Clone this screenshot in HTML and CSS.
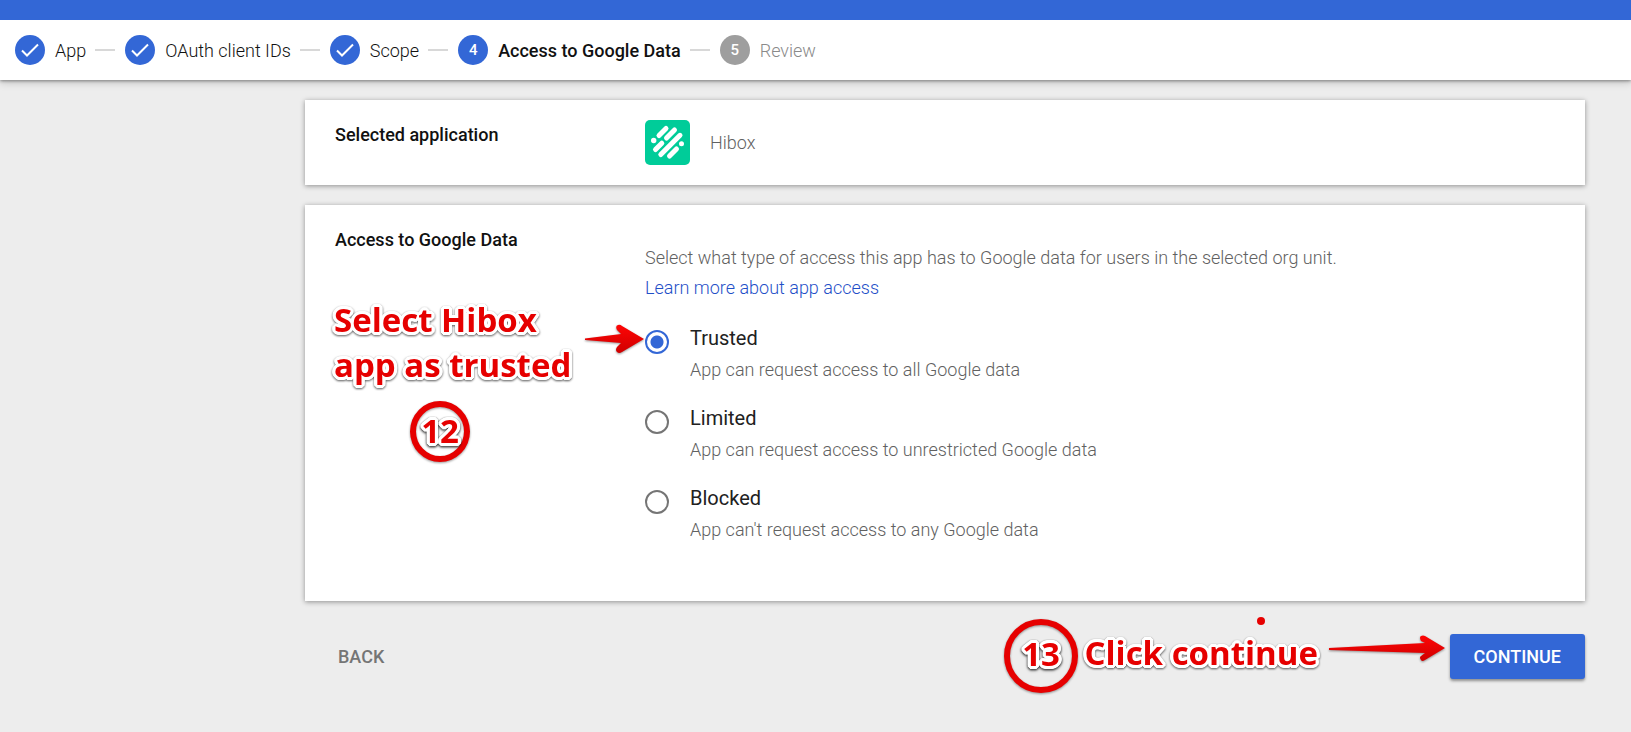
FILE: index.html
```html
<!DOCTYPE html>
<html lang="en">
<head>
<meta charset="utf-8">
<title>Access to Google Data</title>
<link rel="stylesheet" href="styles.css">
</head>
<body>
<header class="header">
  <div class="topbar"></div>
  <ol class="stepper">
    <li class="step"><span class="badge"><svg class="check" viewBox="0 0 18 14" aria-hidden="true"><path d="M1 7.5 6 12.5 17 1.5"/></svg></span><span class="step-name">App</span></li>
    <li class="step"><span class="badge"><svg class="check" viewBox="0 0 18 14" aria-hidden="true"><path d="M1 7.5 6 12.5 17 1.5"/></svg></span><span class="step-name">OAuth client IDs</span></li>
    <li class="step"><span class="badge"><svg class="check" viewBox="0 0 18 14" aria-hidden="true"><path d="M1 7.5 6 12.5 17 1.5"/></svg></span><span class="step-name">Scope</span></li>
    <li class="step step-current" aria-current="step"><span class="badge">4</span><span class="step-name">Access to Google Data</span></li>
    <li class="step step-pending"><span class="badge">5</span><span class="step-name">Review</span></li>
  </ol>
</header>
<main class="main">
  <section class="card">
    <h2 class="card-title">Selected application</h2>
    <div class="app">
      <svg class="app-icon" viewBox="0 0 45 45" aria-hidden="true">
        <rect width="45" height="45" rx="5" fill="#00cc99"/>
        <g stroke="#fff" stroke-width="5" stroke-linecap="round" fill="none">
          <path d="M14 15.500 21 8.500M21.500 18 29.500 10M10.500 29.500 16.800 23.200M15.800 34.500 35 15.300M24.500 36 31.500 29"/>
        </g>
        <circle cx="8.700" cy="20.500" r="2.700" fill="#fff"/><circle cx="36.500" cy="23.800" r="2.500" fill="#fff"/>
      </svg>
      <span>Hibox</span>
    </div>
  </section>
  <section class="card card-access">
    <h2 class="card-title">Access to Google Data</h2>
    <div class="access">
      <p class="intro">Select what type of access this app has to Google data for users in the selected org unit.<br><a class="link" href="#">Learn more about app access</a></p>
      <div class="options" role="radiogroup" aria-label="Access to Google Data">
        <label class="option"><input class="radio" type="radio" name="access" checked><span class="option-text"><span class="option-name">Trusted</span><span>App can request access to all Google data</span></span></label>
        <label class="option"><input class="radio" type="radio" name="access"><span class="option-text"><span class="option-name">Limited</span><span>App can request access to unrestricted Google data</span></span></label>
        <label class="option"><input class="radio" type="radio" name="access"><span class="option-text"><span class="option-name">Blocked</span><span>App can't request access to any Google data</span></span></label>
      </div>
    </div>
    <div class="note note-select">Select Hibox<br>app as trusted</div>
    <div class="ring ring-small"><span class="note">12</span></div>
    <svg class="arrow arrow-trusted" viewBox="0 0 60 32" aria-hidden="true">
      <defs><linearGradient id="red" x1="0" y1="0" x2="0" y2="1"><stop offset="0" stop-color="#ff0505"/><stop offset="1" stop-color="#cf0000"/></linearGradient></defs>
      <path fill="url(#red)" d="M0 15.500 36 11 32 7Q30 3 33 2Q35 1 37 3L59 16 37 29Q34 31 32 29Q30 27 32 24L36 20 0 17Z"/>
    </svg>
  </section>
  <div class="actions">
    <button class="btn btn-back" type="button">BACK</button>
    <button class="btn btn-continue" type="button">CONTINUE</button>
    <div class="ring ring-large"><span class="note">13</span></div>
    <div class="note note-continue">Click continue</div>
    <span class="dot"></span>
    <svg class="arrow arrow-continue" viewBox="0 0 118 28" aria-hidden="true">
      <path fill="url(#red)" d="M0 13 96 8 92 6Q90 2 92 1Q94 0 96 1L116 13 96 25Q93 27 92 25Q90 22 92 21L96 18 0 15Z"/>
    </svg>
  </div>
</main>
</body>
</html>
```

FILE: styles.css
```css
* { box-sizing: border-box; }

body {
  margin: 0;
  background: #ededed;
  color: #111;
  font: 300 18px/30px Roboto, "Open Sans", sans-serif;
}

.header {
  position: relative;
  background: #fff;
  box-shadow: 0 1px 3px rgba(0, 0, 0, .4), 0 3px 8px rgba(0, 0, 0, .16);
}

.topbar { height: 20px; background: #3367d6; }

.stepper {
  display: flex;
  align-items: center;
  height: 60px;
  margin: 0;
  padding: 0 15px;
  list-style: none;
}

.step { display: flex; align-items: center; gap: 10px; white-space: nowrap; }
.step + .step::before {
  content: "";
  width: 20px;
  height: 2px;
  margin-left: 9px;
  background: #d8d8d8;
}
.step-name { padding-top: 2px; }
.step-current { font-weight: 500; }
.step-pending { color: #8a8a8a; }

.badge {
  display: flex;
  align-items: center;
  justify-content: center;
  width: 30px;
  height: 30px;
  border-radius: 50%;
  background: #3367d6;
  color: #fff;
  font-size: 15px;
  font-weight: 500;
}
.step-pending .badge { background: #9e9e9e; }
.check { width: 18px; height: 14px; fill: none; stroke: #fff; stroke-width: 2; }

.main { padding: 20px 46px 53px 305px; }

.card {
  position: relative;
  display: grid;
  grid-template-columns: 310px 1fr;
  padding: 20px 30px;
  background: #fff;
  box-shadow: 0 1px 5px rgba(0, 0, 0, .4);
}
.card + .card { margin-top: 20px; }
.card-access { padding-bottom: 56px; }
.card-title { margin: 0; font-size: 18px; font-weight: 500; line-height: 30px; }

.app { display: flex; align-items: center; gap: 20px; color: #616161; }
.app-icon { width: 45px; height: 45px; }

.access { padding-top: 18px; color: #616161; }
.intro { margin: 0; }
.link { color: #1f50c8; text-decoration: none; }

.options { display: grid; gap: 18px; margin-top: 20px; }
.option { display: flex; align-items: flex-start; gap: 21px; }
.option-text { display: grid; line-height: 31px; }
.option-name { color: #212121; font-size: 20px; font-weight: 400; }

.radio {
  appearance: none;
  width: 24px;
  height: 24px;
  margin: 7px 0 0;
  border: 2px solid #757575;
  border-radius: 50%;
}
.radio:checked {
  border-color: #3367d6;
  background: radial-gradient(circle, #3367d6 6px, transparent 7px);
}

.actions {
  position: relative;
  display: flex;
  justify-content: space-between;
  margin-top: 33px;
}
.btn {
  height: 45px;
  border: 0;
  border-radius: 3px;
  font: 500 18px/30px Roboto, sans-serif;
}
.btn-back { padding: 0 33px; background: none; color: #757575; }
.btn-continue {
  padding: 0 24px;
  background: #3367d6;
  color: #fff;
  box-shadow: 0 2px 3px rgba(0, 0, 0, .4);
}

.note {
  color: #e60000;
  font: 700 33px/45px "Open Sans", "Noto Sans", sans-serif;
  white-space: nowrap;
  text-shadow:
    3px 0 #fff, -3px 0 #fff, 0 3px #fff, 0 -3px #fff,
    2px 2px #fff, -2px 2px #fff, 2px -2px #fff, -2px -2px #fff,
    3px 1px #fff, -3px 1px #fff, 1px 3px #fff, -1px 3px #fff,
    3px -1px #fff, -3px -1px #fff, 1px -3px #fff, -1px -3px #fff;
  filter: drop-shadow(0 1px 1px rgba(0, 0, 0, .65));
}
.note-select { position: absolute; left: 29px; top: 92px; }
.note-continue { position: absolute; right: 267px; top: -4px; }

.ring {
  position: absolute;
  display: flex;
  align-items: center;
  justify-content: center;
  border: 6px solid #e60000;
  border-radius: 50%;
  filter: drop-shadow(0 1px 1px rgba(0, 0, 0, .4));
}
.ring-small { left: 105px; top: 196px; width: 60px; height: 61px; padding-bottom: 3px; }
.ring-large { right: 507px; top: -15px; width: 74px; height: 74px; padding-bottom: 6px; }

.dot {
  position: absolute;
  right: 320px;
  top: -17px;
  width: 8px;
  height: 8px;
  border-radius: 50%;
  background: #e60000;
}

.arrow { position: absolute; filter: drop-shadow(0 1px 1px rgba(0, 0, 0, .4)); }
.arrow-trusted { left: 280px; top: 118px; width: 60px; height: 32px; }
.arrow-continue { right: 138px; top: 1px; width: 118px; height: 28px; }
```
